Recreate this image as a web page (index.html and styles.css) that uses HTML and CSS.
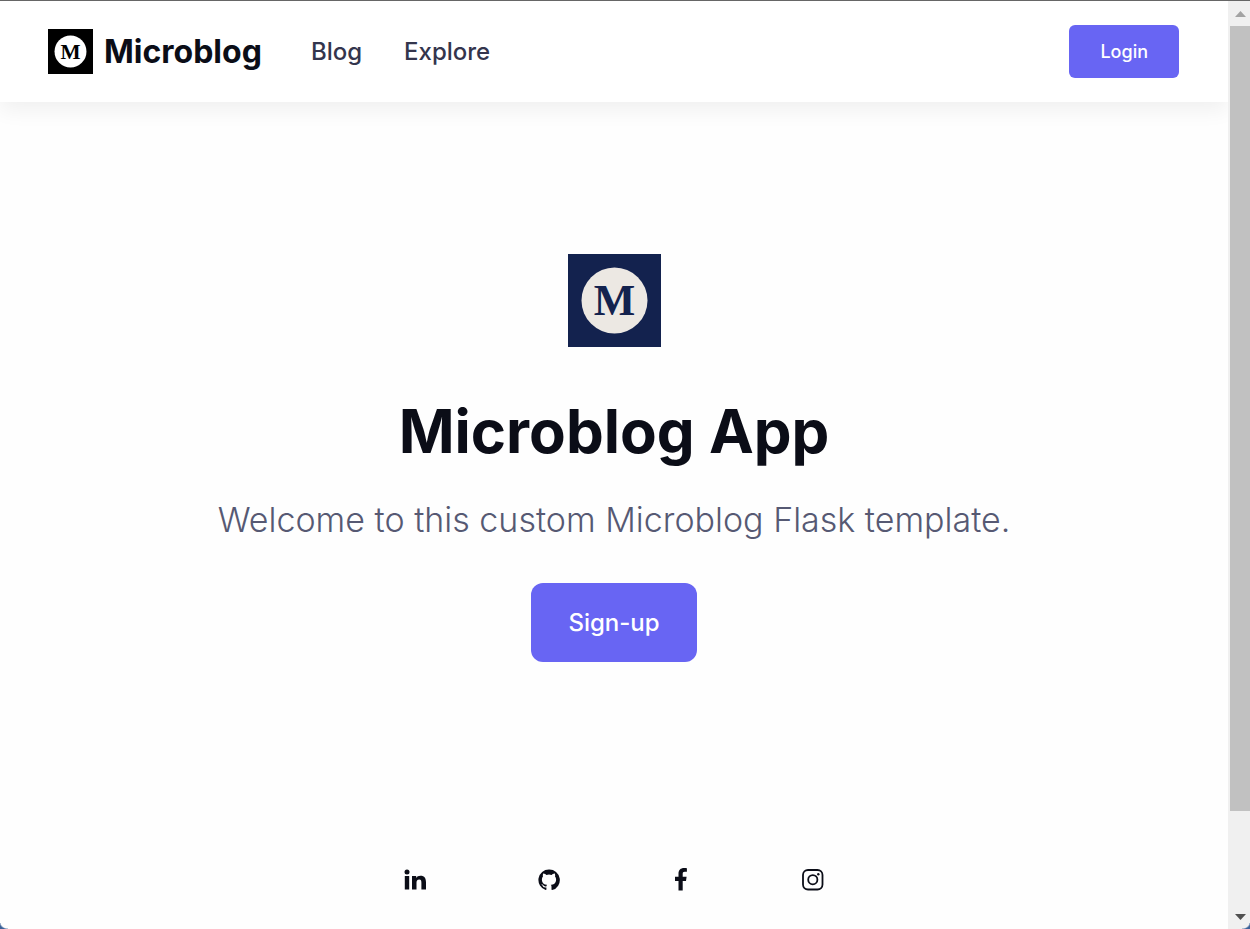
FILE: index.html
```html
<!DOCTYPE html>
<html lang="en">
<head>
<meta charset="utf-8">
<meta name="viewport" content="width=device-width, initial-scale=1">
<title>Microblog</title>
<link rel="stylesheet" href="styles.css">
</head>
<body>
<div class="window">
  <div class="page">
    <header class="navbar">
      <a class="brand" href="#">
        <svg class="brand-logo" viewBox="0 0 93 93" aria-hidden="true">
          <rect width="93" height="93" fill="#000"/>
          <circle cx="46.500" cy="46.500" r="33" fill="#fff"/>
          <text class="monogram" x="46.500" y="61" fill="#000">M</text>
        </svg>
        <span class="brand-name">Microblog</span>
      </a>
      <nav class="nav-links">
        <a class="nav-link" href="#">Blog</a>
        <a class="nav-link" href="#">Explore</a>
      </nav>
      <button class="btn btn-login" type="button">Login</button>
    </header>

    <main class="hero">
      <svg class="hero-logo" viewBox="0 0 93 93" aria-hidden="true">
        <rect width="93" height="93" fill="#13224e"/>
        <circle cx="46.500" cy="46.500" r="33" fill="#ece8e3"/>
        <text class="monogram" x="46.500" y="61" fill="#13224e">M</text>
      </svg>
      <h1 class="hero-title">Microblog App</h1>
      <p class="hero-text">Welcome to this custom Microblog Flask template.</p>
      <button class="btn btn-signup" type="button">Sign-up</button>
    </main>

    <footer class="social">
      <a class="social-link" href="#" aria-label="LinkedIn">
        <svg class="social-icon" viewBox="0 0 24 24"><circle cx="3" cy="3.900" r="2.500"/><path d="M.8 8h4.400v13.500H.8zM8 8h4.200v1.900c.8-1.400 2.200-2.200 4.200-2.200 4.200 0 5.600 2.700 5.600 6.600v7.200h-4.600v-6.600c0-1.700-.1-3.400-2.200-3.400s-2.700 1.500-2.700 3.300v6.700H8z"/></svg>
      </a>
      <a class="social-link" href="#" aria-label="GitHub">
        <svg class="social-icon" viewBox="0 0 24 24"><path d="M13 1.500A10.500 10.500 0 0 0 9.700 22c.5.100.7-.2.700-.5v-2c-2.900.6-3.500-1.200-3.500-1.200-.5-1.200-1.200-1.500-1.200-1.500-.9-.7.100-.6.100-.6 1 .1 1.600 1.100 1.600 1.100.9 1.600 2.500 1.200 3.100.9.100-.7.300-1.100.6-1.400-2.300-.3-5.200-1.200-5.200-5.400 0-1.100.4-2.100 1.100-2.800-.1-.3-.4-1.500.2-3 0 0 1.200-.1 3.200 1.300a10 10 0 0 1 5.200 0c2-1.400 3.200-1.300 3.200-1.300.6 1.500.3 2.700.2 3 .7.700 1.100 1.700 1.100 2.800 0 4.200-2.900 5.100-5.300 5.400.4.300.7 1 .7 1.900v2.900c0 .3.200.6.700.5A10.500 10.500 0 0 0 13 1.500z"/></svg>
      </a>
      <a class="social-link" href="#" aria-label="Facebook">
        <svg class="social-icon" viewBox="0 0 24 24"><path d="M10.500 22.500V13H7V8.800h3.500V5.600c0-3.500 2.100-5.600 5.600-5.600 1.400 0 2.300.1 2.800.2v3.600h-2.100c-1.700 0-2.100.8-2.100 2.100v2.900h3.900l-.6 4.200h-3.300v9.500z"/></svg>
      </a>
      <a class="social-link" href="#" aria-label="Instagram">
        <svg class="social-icon" viewBox="0 0 24 24"><rect x="3" y="2" width="19.500" height="19.500" rx="5" fill="none" stroke="currentColor" stroke-width="1.800"/><circle cx="12.800" cy="11.700" r="4.600" fill="none" stroke="currentColor" stroke-width="1.800"/><circle cx="18.300" cy="6.300" r="1.200"/></svg>
      </a>
    </footer>
  </div>

  <div class="scrollbar" aria-hidden="true">
    <svg class="scroll-arrow" viewBox="0 0 11 6"><path d="M0 6L5.500 0L11 6z" fill="#a3a3a3"/></svg>
    <div class="scroll-track"><div class="scroll-thumb"></div></div>
    <svg class="scroll-arrow" viewBox="0 0 11 6"><path d="M0 0L5.500 6L11 0z" fill="#505050"/></svg>
  </div>
  <span class="corner corner-left"></span>
  <span class="corner corner-right"></span>
</div>
</body>
</html>
```
FILE: styles.css
```css
* {
  box-sizing: border-box;
}

body {
  margin: 0;
  background: #fefefe;
  color: #0b0d17;
  font-family: Inter, "Open Sans", sans-serif;
}

a {
  color: inherit;
  text-decoration: none;
}

.window {
  position: relative;
  display: flex;
  min-height: 100vh;
  border-top: 1px solid #666;
}

.page {
  flex: 1;
  display: flex;
  flex-direction: column;
  overflow: hidden;
}

.navbar {
  display: flex;
  align-items: center;
  padding: 24px 49px 24px 48px;
  background: #fff;
  box-shadow: 0 8px 20px rgba(0, 0, 0, 0.06);
}

.brand {
  display: flex;
  align-items: center;
  gap: 11px;
}

.brand-logo {
  width: 45px;
  height: 45px;
}

.monogram {
  font-family: "Liberation Serif", serif;
  font-size: 44px;
  font-weight: 700;
  text-anchor: middle;
}

.brand-name {
  font-size: 32px;
  font-weight: 700;
  line-height: 44px;
}

.nav-links {
  display: flex;
  flex: 1;
  gap: 42px;
  margin-left: 49px;
}

.nav-link {
  color: #33354d;
  font-size: 24px;
  font-weight: 500;
  line-height: 32px;
}

.btn {
  border: 0;
  background: #6865f3;
  color: #fff;
  font-family: inherit;
  font-weight: 500;
  cursor: pointer;
}

.btn-login {
  padding: 14px 31px;
  border-radius: 6px;
  font-size: 18px;
  line-height: 25px;
}

.hero {
  display: flex;
  flex: 1;
  flex-direction: column;
  align-items: center;
  padding: 152px 24px 0;
  text-align: center;
}

.hero-logo {
  width: 93px;
  height: 93px;
}

.hero-title {
  margin: 44px 0 0;
  font-size: 60px;
  font-weight: 700;
  line-height: 80px;
}

.hero-text {
  margin: 24px 0 0;
  color: #565973;
  font-size: 34px;
  font-weight: 300;
  line-height: 50px;
}

.btn-signup {
  margin-top: 38px;
  padding: 22px 37px;
  border-radius: 12px;
  font-size: 24px;
  line-height: 35px;
}

.social {
  display: grid;
  grid-template-columns: repeat(4, 132px);
  justify-content: center;
  padding-bottom: 37px;
}

.social-link {
  display: flex;
  justify-content: center;
}

.social-icon {
  width: 24px;
  height: 24px;
  fill: currentColor;
}

.scrollbar {
  display: flex;
  flex-direction: column;
  align-items: center;
  width: 22px;
  padding: 10px 0 9px 2px;
  background: #f0f0f0;
}

.scroll-arrow {
  width: 11px;
  height: 6px;
}

.scroll-track {
  display: grid;
  flex: 1;
  grid-template-rows: 42fr 5fr;
  width: 100%;
  margin: 9px 0;
}

.scroll-thumb {
  background: #c1c1c1;
}

.corner {
  position: absolute;
  bottom: 0;
  width: 8px;
  height: 6px;
}

.corner-left {
  left: 0;
  background: radial-gradient(ellipse at 100% 0, transparent 60%, #3c6299 75%);
}

.corner-right {
  right: 0;
  background: radial-gradient(ellipse at 0 0, transparent 60%, #3c6299 75%);
}
```
